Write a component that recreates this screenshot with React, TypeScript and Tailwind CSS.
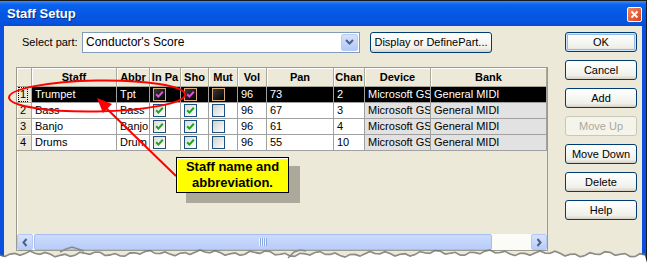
import React from "react";

type Row = {
  n: string;
  staff: string;
  abbr: string;
  inpa: boolean;
  sho: boolean;
  mut: boolean;
  vol: string;
  pan: string;
  chan: string;
  sel: boolean;
};

const rows: Row[] = [
  { n: "1", staff: "Trumpet", abbr: "Tpt", inpa: true, sho: true, mut: false, vol: "96", pan: "73", chan: "2", sel: true },
  { n: "2", staff: "Bass", abbr: "Bass", inpa: true, sho: true, mut: false, vol: "96", pan: "67", chan: "3", sel: false },
  { n: "3", staff: "Banjo", abbr: "Banjo", inpa: true, sho: true, mut: false, vol: "96", pan: "61", chan: "4", sel: false },
  { n: "4", staff: "Drums", abbr: "Drum", inpa: true, sho: true, mut: false, vol: "96", pan: "55", chan: "10", sel: false },
];

const headers = ["", "Staff", "Abbr", "In Pa", "Sho", "Mut", "Vol", "Pan", "Chan", "Device", "Bank"];

function Check({ checked, sel }: { checked: boolean; sel: boolean }) {
  return (
    <div
      className={
        sel
          ? "w-[13px] h-[13px] border border-[#D9A878] bg-[linear-gradient(135deg,#3a3a3a,#000000)] flex items-center justify-center"
          : checked
          ? "w-[13px] h-[13px] border border-[#1C5180] bg-[linear-gradient(135deg,#DCDCD7,#FFFFFF)] flex items-center justify-center"
          : "w-[13px] h-[13px] border border-[#1C5180] bg-[linear-gradient(135deg,#D0D0CB,#FFFFFF)] flex items-center justify-center"
      }
    >
      {checked && (
        <svg width="9" height="9" viewBox="0 0 9 9">
          <polyline
            points="1.2,4.2 3.4,6.6 7.8,1.8"
            fill="none"
            stroke={sel ? "#E24FE2" : "#21A121"}
            strokeWidth="2"
          />
        </svg>
      )}
    </div>
  );
}

function XpButton({ label, disabled, def, className }: { label: string; disabled?: boolean; def?: boolean; className?: string }) {
  const base = "flex items-center justify-center rounded-[3px] border text-[11px] leading-none ";
  const style = disabled
    ? "border-[#C9C7BA] bg-[#F5F4EA] text-[#ACA899]"
    : def
    ? "border-[#003C74] bg-[linear-gradient(180deg,#FFFFFF,#F0F0EA_80%,#D6D0C5)] text-black shadow-[inset_0_0_0_1px_#CEE7FF,inset_0_0_0_2px_#98B8EA]"
    : "border-[#003C74] bg-[linear-gradient(180deg,#FFFFFF,#F0F0EA_80%,#D6D0C5)] text-black";
  return <div className={base + style + " " + (className ?? "")}>{label}</div>;
}

function TornEdge() {
  const pts: string[] = [];
  const shadow: string[] = [];
  for (let x = 0; x <= 648; x += 5) {
    const y = 254.5 + Math.sin(x * 0.37) * 1.6 + Math.sin(x * 0.11 + 1) * 1.4 + Math.sin(x * 0.023) * 0.8;
    pts.push(`${x},${y.toFixed(1)}`);
    shadow.push(`${x},${(y - 0.8).toFixed(1)}`);
  }
  return (
    <svg className="absolute left-0 top-0 pointer-events-none" width="648" height="267" viewBox="0 0 648 267">
      <polyline points={shadow.join(" ")} fill="none" stroke="#6E6E6E" strokeWidth="2" opacity="0.75" />
      <polygon points={`0,267 ${pts.join(" ")} 648,267`} fill="#FFFFFF" />
      <polyline points="60,252 66,249 72,247 78,249 84,251" fill="none" stroke="#8A8A8A" strokeWidth="1.5" />
      <polyline points="288,258 294,252 300,250 306,251" fill="none" stroke="#8A8A8A" strokeWidth="1.5" />
    </svg>
  );
}

export default function App() {
  return (
    <div className="relative w-[648px] h-[267px] bg-white overflow-hidden font-['Liberation_Sans',Arial,sans-serif] text-[11px] text-black">
      <div className="w-[647px] h-[262px] border-t border-r border-[#1A1A1A] bg-[#0A4FDF] flex flex-col">
        {/* Title bar */}
        <div className="h-[25px] flex items-center justify-between bg-[linear-gradient(180deg,#3B8BF8_0%,#0A63EC_14%,#0558E4_50%,#0555E0_85%,#0A4AD0_100%)] pl-[7px] pr-[4px]">
          <span className="text-white font-bold text-[13px] [text-shadow:1px_1px_0_#0A2B8C]">Staff Setup</span>
          <div className="w-[15px] h-[15px] rounded-[2px] border border-white bg-[linear-gradient(135deg,#F08A5E,#D6401A)] flex items-center justify-center mt-[1px]">
            <svg width="9" height="9" viewBox="0 0 9 9">
              <path d="M1.5 1.5 L7.5 7.5 M7.5 1.5 L1.5 7.5" stroke="#FFFFFF" strokeWidth="1.8" />
            </svg>
          </div>
        </div>

        {/* Body */}
        <div className="flex-1 mx-[4px] bg-[#ECE9D8] flex">
          <div className="w-[561px] flex flex-col">
            <div className="mt-[5px] h-[22px] flex items-center">
              <span className="ml-[18px] w-[60px]">Select part:</span>
              <div className="w-[278px] h-[21px] border border-[#7F9DB9] bg-white flex items-center">
                <span className="pl-[3px] flex-1 text-[12px]">Conductor's Score</span>
                <div className="w-[17px] h-[17px] mr-[1px] rounded-[2px] bg-[linear-gradient(180deg,#D5E2FC,#B2C8F6)] border border-[#B9CCF5] flex items-center justify-center">
                  <svg width="9" height="6" viewBox="0 0 9 6">
                    <polyline points="1,1 4.5,4.5 8,1" fill="none" stroke="#4D6185" strokeWidth="2" />
                  </svg>
                </div>
              </div>
              <XpButton label="Display or DefinePart..." className="ml-[10px] w-[122px] h-[21px]" />
            </div>

            {/* Grid */}
            <div className="mt-[14px] ml-[12px] w-[532px] h-[184px] border border-[#9C9A8F] shadow-[inset_1px_1px_0_#FFFFFF] flex flex-col bg-[#ECE9D8]">
              <div className="grid grid-cols-[15px_85px_33px_31px_28px_29px_29px_67px_31px_66px_116px]">
                {headers.map((h, i) => (
                  <div
                    key={"h" + i}
                    className="h-[19px] bg-[#ECE9D8] border-r border-b border-[#ACA899] shadow-[inset_1px_1px_0_#FFFFFF] font-bold text-center leading-[18px] overflow-hidden whitespace-nowrap"
                  >
                    {h}
                  </div>
                ))}
                {rows.map((r) => {
                  const cell = r.sel
                    ? "h-[16px] border-r border-b border-[#A0A0A0] bg-black text-white overflow-hidden whitespace-nowrap pl-[3px] leading-[15px]"
                    : "h-[16px] border-r border-b border-[#A0A0A0] bg-white overflow-hidden whitespace-nowrap pl-[3px] leading-[15px]";
                  const grayCell = r.sel
                    ? cell
                    : "h-[16px] border-r border-b border-[#A0A0A0] bg-[#E2E2E2] overflow-hidden whitespace-nowrap pl-[3px] leading-[15px]";
                  const boxCell = r.sel
                    ? "h-[16px] border-r border-b border-[#A0A0A0] bg-black flex items-center pl-[3px]"
                    : "h-[16px] border-r border-b border-[#A0A0A0] bg-white flex items-center pl-[3px]";
                  return (
                    <React.Fragment key={r.n}>
                      <div className="h-[16px] border-r border-b border-[#ACA899] bg-[#ECE9D8] shadow-[inset_1px_1px_0_#FFFFFF] pl-[3px] leading-[15px]">
                        {r.sel ? (
                          <span className="inline-block outline-1 outline-dotted outline-black leading-[13px] px-px -ml-[1px]">{r.n}</span>
                        ) : (
                          r.n
                        )}
                      </div>
                      <div className={cell}>{r.staff}</div>
                      <div className={cell + " pl-[2px]"}>{r.abbr}</div>
                      <div className={boxCell}>
                        <Check checked={r.inpa} sel={r.sel} />
                      </div>
                      <div className={boxCell}>
                        <Check checked={r.sho} sel={r.sel} />
                      </div>
                      <div className={boxCell}>
                        <Check checked={r.mut} sel={r.sel} />
                      </div>
                      <div className={cell}>{r.vol}</div>
                      <div className={cell}>{r.pan}</div>
                      <div className={cell}>{r.chan}</div>
                      <div className={grayCell + " pl-[1px]"}>Microsoft GS</div>
                      <div className={grayCell}>General MIDI</div>
                    </React.Fragment>
                  );
                })}
              </div>
              <div className="flex-1" />
              {/* Scrollbar */}
              <div className="h-[16px] flex bg-[#FBFBF8]">
                <div className="w-[16px] h-[16px] rounded-[2px] border border-[#B6C7F3] bg-[linear-gradient(180deg,#D7E3FD,#B8CDF8)] flex items-center justify-center">
                  <svg width="6" height="9" viewBox="0 0 6 9">
                    <polyline points="4.5,1 1.5,4.5 4.5,8" fill="none" stroke="#4D6185" strokeWidth="2" />
                  </svg>
                </div>
                <div className="ml-[1px] w-[458px] h-[16px] rounded-[2px] border border-[#A5BDF0] bg-[linear-gradient(180deg,#CCDBFC,#B9CDF9)] flex items-center justify-center">
                  <svg width="8" height="8" viewBox="0 0 8 8">
                    <path d="M0.5 0 V8 M2.5 0 V8 M4.5 0 V8 M6.5 0 V8" stroke="#EEF3FF" strokeWidth="1" />
                    <path d="M1.5 0 V8 M3.5 0 V8 M5.5 0 V8 M7.5 0 V8" stroke="#8CA8E6" strokeWidth="1" />
                  </svg>
                </div>
                <div className="flex-1" />
                <div className="w-[16px] h-[16px] rounded-[2px] border border-[#B6C7F3] bg-[linear-gradient(180deg,#D7E3FD,#B8CDF8)] flex items-center justify-center">
                  <svg width="6" height="9" viewBox="0 0 6 9">
                    <polyline points="1.5,1 4.5,4.5 1.5,8" fill="none" stroke="#4D6185" strokeWidth="2" />
                  </svg>
                </div>
              </div>
            </div>
          </div>

          {/* Right buttons */}
          <div className="pt-[6px] flex flex-col gap-[8px]">
            <XpButton label="OK" def className="w-[72px] h-[20px]" />
            <XpButton label="Cancel" className="w-[72px] h-[20px]" />
            <XpButton label="Add" className="w-[72px] h-[20px]" />
            <XpButton label="Move Up" disabled className="w-[72px] h-[20px]" />
            <XpButton label="Move Down" className="w-[72px] h-[20px]" />
            <XpButton label="Delete" className="w-[72px] h-[20px]" />
            <XpButton label="Help" className="w-[72px] h-[20px]" />
          </div>
        </div>
      </div>

      <TornEdge />

      {/* Annotation: ellipse and arrow */}
      <svg className="absolute left-0 top-0 pointer-events-none" width="648" height="267" viewBox="0 0 648 267">
        <ellipse cx="97" cy="96" rx="88" ry="15.5" fill="none" stroke="#FF0000" strokeWidth="2" transform="rotate(-1 97 96)" />
        <line x1="176" y1="176" x2="104" y2="106" stroke="#FF0000" strokeWidth="2" />
        <polygon points="97,98 112,104 103,113" fill="#FF0000" />
      </svg>

      {/* Callout */}
      <div className="absolute left-[186px] top-[166px] w-[114px] h-[37px] bg-[#ACA89C]" />
      <div className="absolute left-[176px] top-[157px] w-[113px] h-[36px] bg-[#FFFF00] border border-black shadow-[inset_1px_1px_0_#FFFFFF] flex flex-col items-center justify-center font-bold text-[13px] leading-[16px]">
        <span>Staff name and</span>
        <span>abbreviation.</span>
      </div>
    </div>
  );
}
